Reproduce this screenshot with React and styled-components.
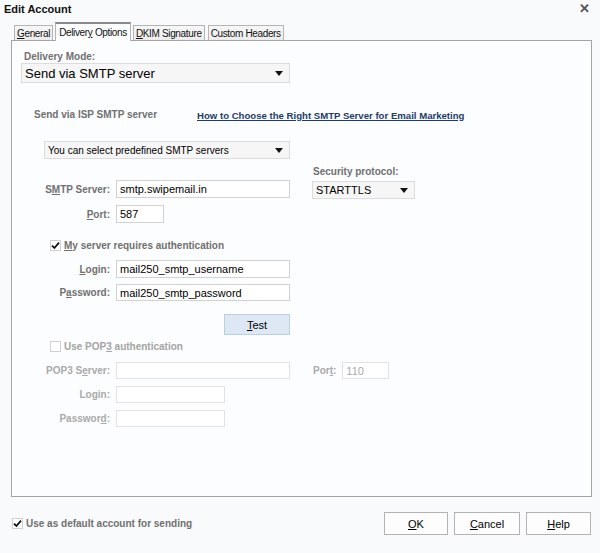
import React from "react";
import styled, { createGlobalStyle } from "styled-components";

const GlobalStyle = createGlobalStyle`
  html, body {
    margin: 0;
    padding: 0;
    background: #f9fafb;
  }
  body {
    font-family: "Liberation Sans", Arial, sans-serif;
    font-size: 11px;
    color: #000;
  }
`;

const Window = styled.div`
  width: 600px;
  height: 553px;
  display: flex;
  flex-direction: column;
  box-sizing: border-box;
`;

const TitleBar = styled.div`
  height: 17px;
  display: flex;
  align-items: center;
  justify-content: space-between;
  padding: 0 10px 0 4px;
  font-weight: bold;
  font-size: 11px;
  color: #111;
`;

const Close = styled.span`
  font-size: 13px;
  color: #555;
  font-weight: bold;
`;

const TabStrip = styled.div`
  display: flex;
  align-items: flex-end;
  height: 18px;
  margin-top: 5px;
  padding-left: 14px;
  gap: 3px;
  position: relative;
  z-index: 1;
`;

const Tab = styled.div`
  box-sizing: border-box;
  height: ${(p) => (p.$active ? "19px" : "15px")};
  margin: ${(p) => (p.$active ? "0 -1px -1px -1px" : "0")};
  padding: ${(p) => (p.$active ? "0 3px" : "0 2px")};
  display: flex;
  align-items: center;
  border: 1px solid #b4b4b4;
  border-top: ${(p) => (p.$active ? "2px solid #8a8a8a" : "1px solid #b4b4b4")};
  border-bottom: none;
  background: ${(p) => (p.$active ? "#fcfdfe" : "linear-gradient(#f7f7f7, #ececec)")};
  font-size: 10px;
  letter-spacing: -0.35px;
  color: #111;
  white-space: nowrap;
`;

const Panel = styled.div`
  box-sizing: border-box;
  margin-left: 11px;
  width: 581px;
  height: 457px;
  border: 1px solid #a4a4a4;
  background: #fcfdfe;
  display: flex;
  flex-direction: column;
`;

const U = styled.span`
  text-decoration: underline;
`;

const GroupLabel = styled.div`
  font-weight: bold;
  font-size: 10px;
  line-height: 12px;
  color: ${(p) => (p.$disabled ? "#aaaaaa" : "#707070")};
`;

const ModeBlock = styled.div`
  padding: 10px 0 0 9px;
  display: flex;
  flex-direction: column;
  ${GroupLabel} {
    padding-left: 3px;
  }
`;

const Select = styled.div`
  box-sizing: border-box;
  width: ${(p) => p.$w}px;
  height: ${(p) => p.$h || 18}px;
  margin-left: ${(p) => p.$ml || 0}px;
  margin-top: ${(p) => p.$mt || 0}px;
  border: 1px solid #dcdcdc;
  background: #f6f6f6;
  display: flex;
  align-items: center;
  justify-content: space-between;
  padding: 0 6px 0 3px;
  font-size: ${(p) => p.$fs || 11}px;
  color: #000;
  white-space: nowrap;
`;

const Arrow = styled.span`
  width: 0;
  height: 0;
  border-left: 4px solid transparent;
  border-right: 4px solid transparent;
  border-top: 5px solid #111;
`;

const IspRow = styled.div`
  margin-top: 25px;
  padding-left: 22px;
  height: 14px;
  display: flex;
  align-items: center;
`;

const Link = styled.a`
  margin-left: 40px;
  font-weight: bold;
  font-size: 9.6px;
  color: #1d3c6b;
  text-decoration: underline;
`;

const SmtpRow = styled.div`
  margin-top: 7px;
  display: flex;
  align-items: flex-end;
`;

const FieldRow = styled.div`
  display: flex;
  align-items: center;
  margin-top: ${(p) => p.$mt || 0}px;
  margin-bottom: ${(p) => p.$mb || 0}px;
`;

const Label = styled.label`
  width: 98px;
  margin-right: 6px;
  text-align: right;
  font-weight: bold;
  font-size: 10px;
  color: ${(p) => (p.$disabled ? "#aaaaaa" : "#707070")};
  white-space: nowrap;
`;

const Input = styled.div`
  box-sizing: border-box;
  width: ${(p) => p.$w}px;
  height: ${(p) => p.$h || 18}px;
  border: 1px solid ${(p) => (p.$disabled ? "#e2e2e2" : "#d2d2d2")};
  background: #fff;
  padding: 0 3px;
  display: flex;
  align-items: center;
  font-size: 11px;
  color: ${(p) => (p.$disabled ? "#a8a8a8" : "#000")};
  white-space: nowrap;
`;

const SecurityCol = styled.div`
  margin-left: 22px;
  display: flex;
  flex-direction: column;
  gap: 3px;
  ${GroupLabel} {
    padding-left: 1px;
  }
`;

const CheckRow = styled.div`
  display: flex;
  align-items: center;
  gap: 3px;
  margin-top: ${(p) => p.$mt || 0}px;
  padding-left: ${(p) => p.$pl || 0}px;
`;

const Box = styled.span`
  box-sizing: border-box;
  width: 11px;
  height: 11px;
  border: 1px solid #d0d0d0;
  background: #fff;
  display: flex;
  align-items: center;
  justify-content: center;
`;

const CheckText = styled.span`
  font-weight: bold;
  font-size: 10px;
  color: ${(p) => (p.$disabled ? "#a4a4a4" : "#707070")};
`;

const TestButton = styled.div`
  box-sizing: border-box;
  margin: 13px 0 0 212px;
  width: 66px;
  height: 21px;
  border: 1px solid #bccfe3;
  background: #dde8f4;
  display: flex;
  align-items: center;
  justify-content: center;
  font-size: 11px;
`;

const PortLabel = styled.label`
  margin: 0 6px 0 23px;
  font-weight: bold;
  font-size: 10px;
  color: #aaaaaa;
`;

const BottomBar = styled.div`
  margin-top: 15px;
  padding: 0 9px 0 12px;
  display: flex;
  align-items: center;
  justify-content: space-between;
`;

const Buttons = styled.div`
  display: flex;
  gap: 6px;
`;

const Button = styled.div`
  box-sizing: border-box;
  width: ${(p) => p.$w}px;
  height: 23px;
  border: 1px solid #b3b3b3;
  background: #fdfdfd;
  display: flex;
  align-items: center;
  justify-content: center;
  font-size: 11px;
`;

const Check = ({ checked }) => (
  <Box>
    {checked && (
      <svg width="9" height="9" viewBox="0 0 9 9">
        <path d="M1 4.6 L3.4 7 L8 1.6" fill="none" stroke="#111" strokeWidth="1.8" />
      </svg>
    )}
  </Box>
);

export default function App() {
  return (
    <Window>
      <GlobalStyle />
      <TitleBar>
        <span>Edit Account</span>
        <Close>✕</Close>
      </TitleBar>

      <TabStrip>
        <Tab><span><U>G</U>eneral</span></Tab>
        <Tab $active><span>Deliver<U>y</U> Options</span></Tab>
        <Tab><span><U>D</U>KIM Signature</span></Tab>
        <Tab><span>Custom Headers</span></Tab>
      </TabStrip>

      <Panel>
        <ModeBlock>
          <GroupLabel>Delivery Mode:</GroupLabel>
          <Select $w={269} $h={20} $fs={13}>
            Send via SMTP server
            <Arrow />
          </Select>
        </ModeBlock>

        <IspRow>
          <GroupLabel>Send via ISP SMTP server</GroupLabel>
          <Link>How to Choose the Right SMTP Server for Email Marketing</Link>
        </IspRow>

        <Select $w={246} $ml={32} $mt={19} $fs={10}>
          You can select predefined SMTP servers
          <Arrow />
        </Select>

        <SmtpRow>
          <FieldRow $mb={1}>
            <Label>S<U>M</U>TP Server:</Label>
            <Input $w={174}>smtp.swipemail.in</Input>
          </FieldRow>
          <SecurityCol>
            <GroupLabel>Security protocol:</GroupLabel>
            <Select $w={103}>
              STARTTLS
              <Arrow />
            </Select>
          </SecurityCol>
        </SmtpRow>

        <FieldRow $mt={6}>
          <Label><U>P</U>ort:</Label>
          <Input $w={48}>587</Input>
        </FieldRow>

        <CheckRow $mt={17} $pl={38}>
          <Check checked />
          <CheckText><U>M</U>y server requires authentication</CheckText>
        </CheckRow>

        <FieldRow $mt={9}>
          <Label><U>L</U>ogin:</Label>
          <Input $w={174}>mail250_smtp_username</Input>
        </FieldRow>

        <FieldRow $mt={6}>
          <Label>P<U>a</U>ssword:</Label>
          <Input $w={174} $h={17}>mail250_smtp_password</Input>
        </FieldRow>

        <TestButton><span><U>T</U>est</span></TestButton>

        <CheckRow $mt={6} $pl={38}>
          <Check />
          <CheckText $disabled>Use POP<U>3</U> authentication</CheckText>
        </CheckRow>

        <FieldRow $mt={10}>
          <Label $disabled>POP3 S<U>e</U>rver:</Label>
          <Input $w={174} $h={17} $disabled />
          <PortLabel>Por<U>t</U>:</PortLabel>
          <Input $w={47} $h={17} $disabled>110</Input>
        </FieldRow>

        <FieldRow $mt={7}>
          <Label $disabled>Login:</Label>
          <Input $w={109} $h={17} $disabled />
        </FieldRow>

        <FieldRow $mt={7}>
          <Label $disabled>Passwor<U>d</U>:</Label>
          <Input $w={109} $h={17} $disabled />
        </FieldRow>
      </Panel>

      <BottomBar>
        <CheckRow>
          <Check checked />
          <CheckText>Use as default account for sending</CheckText>
        </CheckRow>
        <Buttons>
          <Button $w={64}><span><U>O</U>K</span></Button>
          <Button $w={66}><span><U>C</U>ancel</span></Button>
          <Button $w={65}><span><U>H</U>elp</span></Button>
        </Buttons>
      </BottomBar>
    </Window>
  );
}
